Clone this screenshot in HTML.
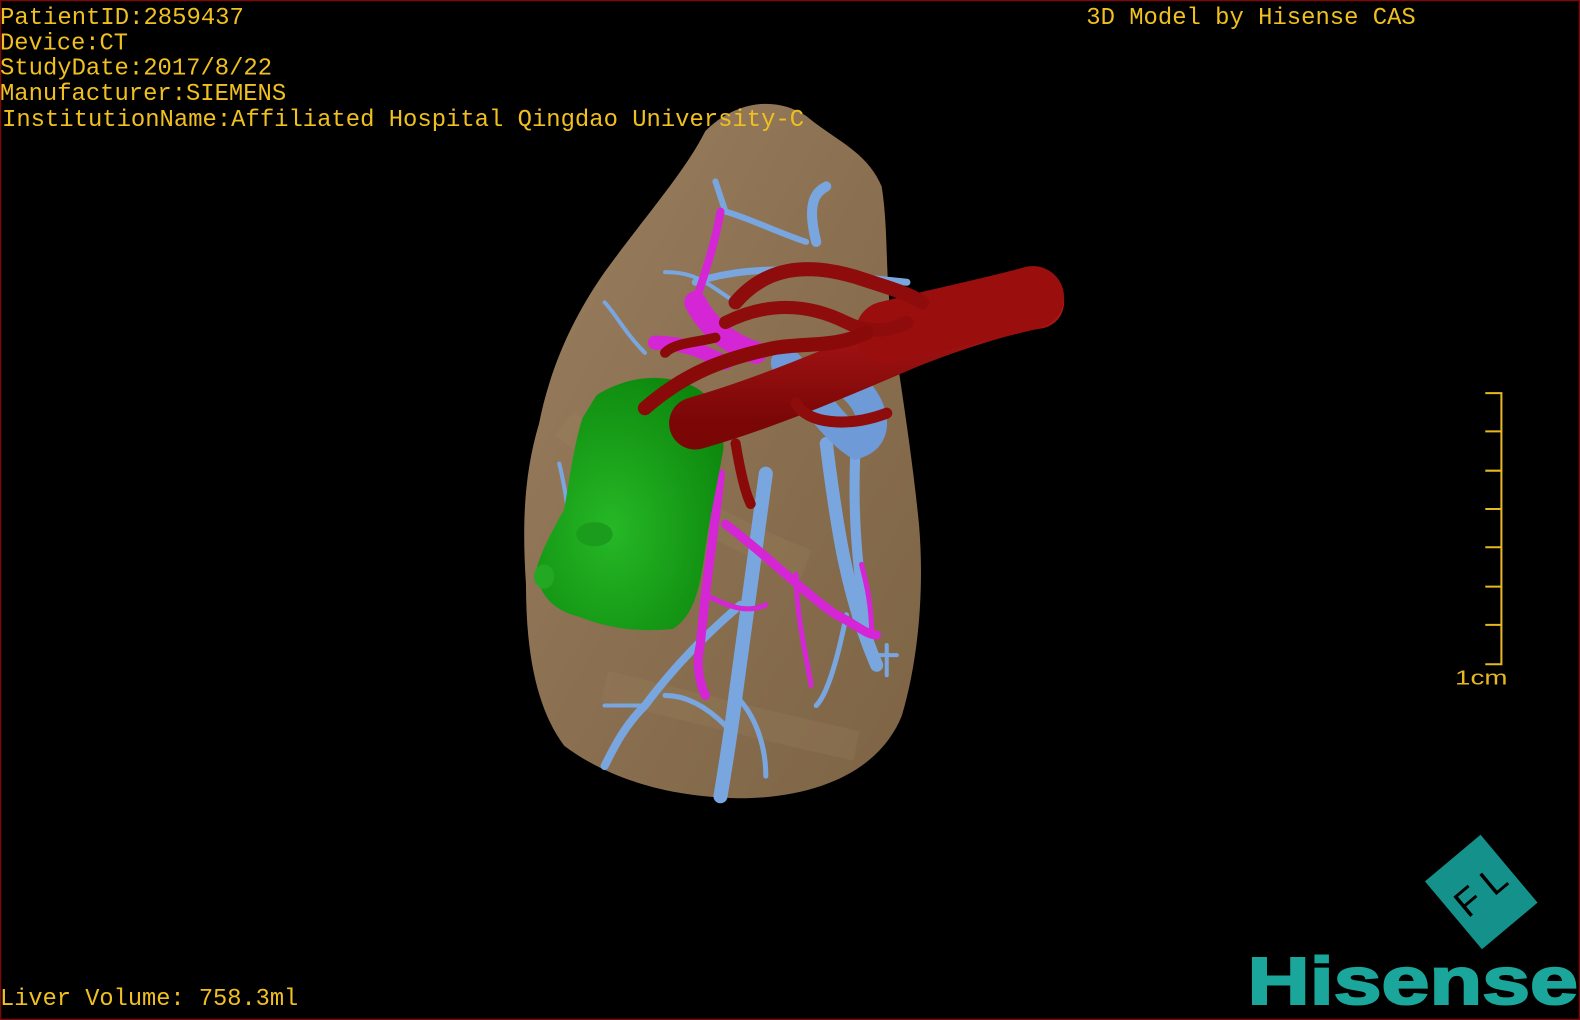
<!DOCTYPE html>
<html><head><meta charset="utf-8"><style>
html,body{margin:0;padding:0;background:#000;width:1580px;height:1020px;overflow:hidden}
svg{display:block}
</style></head><body>
<svg width="1580" height="1020" viewBox="0 0 1568 1012" preserveAspectRatio="none" xmlns="http://www.w3.org/2000/svg">
<defs>
<linearGradient id="lv" x1="0" y1="0" x2="1" y2="1">
<stop offset="0" stop-color="#9a8060"/><stop offset="0.5" stop-color="#8a7050"/><stop offset="1" stop-color="#7d6445"/>
</linearGradient>
<radialGradient id="gr" cx="0.4" cy="0.6" r="0.7">
<stop offset="0" stop-color="#26b826"/><stop offset="1" stop-color="#0c860c"/>
</radialGradient>
<linearGradient id="rd" x1="0" y1="0" x2="0" y2="1">
<stop offset="0" stop-color="#b01818"/><stop offset="1" stop-color="#7a0606"/>
</linearGradient>
</defs>
<rect width="1568" height="1012" fill="#000"/>
<rect x="0.5" y="0.5" width="1567" height="1011" fill="none" stroke="#7a0a0a" stroke-width="1.5"/>
<path d="M700,130 C730,100 770,95 800,115 C830,140 860,150 875,185 C882,230 878,270 885,320 C895,390 905,450 912,520 C918,590 910,660 895,710 C875,760 820,790 740,792 C660,792 600,770 560,740 C530,700 522,640 522,580 C518,520 520,470 535,420 C545,370 565,320 600,270 C640,215 680,170 700,130 Z" fill="url(#lv)"/>
<path d="M560,420 C620,470 700,520 800,560 M600,680 C680,700 760,720 850,740" stroke="#9e8662" stroke-width="30" fill="none" opacity="0.2"/>
<g stroke="#7aa6e0" fill="none" stroke-linecap="round">
<path d="M760,470 C750,540 740,620 730,690 C725,730 720,760 715,790" stroke-width="14"/>
<path d="M820,440 C830,520 840,590 870,660" stroke-width="13"/>
<path d="M850,430 C845,500 850,560 860,620" stroke-width="10"/>
<path d="M735,600 C700,630 670,660 640,700 C620,720 610,740 600,760" stroke-width="8"/>
<path d="M780,360 C800,380 820,420 850,440 C880,430 860,390 840,380" stroke-width="30" stroke="#6f9ad8"/>
<path d="M720,720 C700,700 680,690 660,690" stroke-width="5"/>
<path d="M730,690 C750,710 760,740 760,770" stroke-width="5"/>
<path d="M810,240 C800,200 810,190 820,185" stroke-width="10"/>
<path d="M800,240 C770,230 740,215 720,210 M720,210 L710,180" stroke-width="6"/>
<path d="M690,280 C720,270 760,265 800,270 L900,280" stroke-width="7"/>
<path d="M660,270 C690,270 700,280 730,300" stroke-width="4"/>
<path d="M640,350 C620,330 610,310 600,300" stroke-width="4"/>
<path d="M580,420 C600,400 620,390 640,380" stroke-width="4"/>
<path d="M555,460 C560,480 565,510 565,530" stroke-width="4"/>
<path d="M870,650 L890,650 M880,640 L880,670" stroke-width="4"/>
<path d="M840,610 C830,660 820,690 810,700" stroke-width="5"/>
<path d="M600,700 L640,700" stroke-width="4"/>
</g>
<g stroke="#d426d4" fill="none" stroke-linecap="round">
<path d="M715,210 C710,240 700,270 690,300" stroke-width="8"/>
<path d="M690,300 C700,320 720,340 750,350" stroke-width="22"/>
<path d="M650,340 C680,340 700,350 720,360" stroke-width="14"/>
<path d="M715,470 C710,520 700,580 695,640 C690,660 695,680 700,690" stroke-width="9"/>
<path d="M720,520 C760,550 800,590 830,610 C850,620 860,630 870,630" stroke-width="9"/>
<path d="M790,570 C790,610 800,650 805,680" stroke-width="5"/>
<path d="M700,590 C720,600 740,610 760,600" stroke-width="5"/>
<path d="M865,630 C865,600 860,580 855,560" stroke-width="5"/>
</g>
<path d="M592,392 C620,375 650,370 680,380 C705,388 718,410 718,445 C712,480 705,510 700,545 C695,580 690,610 668,624 C630,628 600,622 575,612 C545,605 532,585 533,562 C540,540 552,520 560,505 C566,470 570,440 578,415 Z" fill="url(#gr)"/>
<ellipse cx="540" cy="572" rx="10" ry="12" fill="#22a822"/>
<ellipse cx="590" cy="530" rx="18" ry="12" fill="#1c9c1c"/>
<g stroke-linecap="round" fill="none">
<path d="M690,420 C760,400 830,370 900,340 C950,320 1000,305 1030,300" stroke="url(#rd)" stroke-width="52"/>
<path d="M880,330 C940,315 990,305 1025,295" stroke="#9a0e0e" stroke-width="62"/>
<path d="M730,300 C760,265 800,260 850,275 C880,285 900,290 915,300" stroke="#8e0c0c" stroke-width="14"/>
<path d="M720,320 C760,300 800,300 840,320 C860,330 880,330 900,320" stroke="#8e0c0c" stroke-width="13"/>
<path d="M640,405 C680,370 720,355 770,345 C800,340 830,345 860,330" stroke="#8a0a0a" stroke-width="14"/>
<path d="M660,350 C670,340 690,340 710,335" stroke="#8a0a0a" stroke-width="10"/>
<path d="M790,400 C800,420 840,425 880,410" stroke="#8e0c0c" stroke-width="11"/>
<path d="M730,440 C735,470 740,490 745,500" stroke="#8a0a0a" stroke-width="10"/>
</g>
<g font-family="'Liberation Mono',monospace" font-size="24" fill="#f0c020">
<text x="0" y="24" textLength="242" lengthAdjust="spacingAndGlyphs">PatientID:2859437</text>
<text x="0" y="49" textLength="127" lengthAdjust="spacingAndGlyphs">Device:CT</text>
<text x="0" y="74" textLength="270" lengthAdjust="spacingAndGlyphs">StudyDate:2017/8/22</text>
<text x="0" y="99" textLength="284" lengthAdjust="spacingAndGlyphs">Manufacturer:SIEMENS</text>
<text x="2" y="125" textLength="796" lengthAdjust="spacingAndGlyphs">InstitutionName:Affiliated Hospital Qingdao University-C</text>
<text x="1078" y="24" textLength="327" lengthAdjust="spacingAndGlyphs">3D Model by Hisense CAS</text>
<text x="0" y="997" textLength="296" lengthAdjust="spacingAndGlyphs">Liver Volume: 758.3ml</text>
</g>
<g stroke="#e8b820" stroke-width="2" fill="none">
<path d="M1474,390 H1490 V659 H1474"/>
<path d="M1474,428 H1490 M1474,467 H1490 M1474,505 H1490 M1474,543 H1490 M1474,582 H1490 M1474,620 H1490"/>
</g>
<text x="1444" y="679" font-family="'Liberation Sans',sans-serif" font-size="20" fill="#e8b820" textLength="52" lengthAdjust="spacingAndGlyphs">1cm</text>
<g transform="translate(1470,885) rotate(-40)">
<rect x="-36" y="-44" width="72" height="88" fill="#14918a"/>
<text x="0" y="12" text-anchor="middle" font-family="'Liberation Sans',sans-serif" font-size="38" fill="#000">F L</text>
</g>
<text x="1238" y="996" font-family="'Liberation Sans',sans-serif" font-weight="bold" font-size="66" fill="#1aa69a" stroke="#1aa69a" stroke-width="2" textLength="328" lengthAdjust="spacingAndGlyphs">Hisense</text>
</svg>
</body></html>
